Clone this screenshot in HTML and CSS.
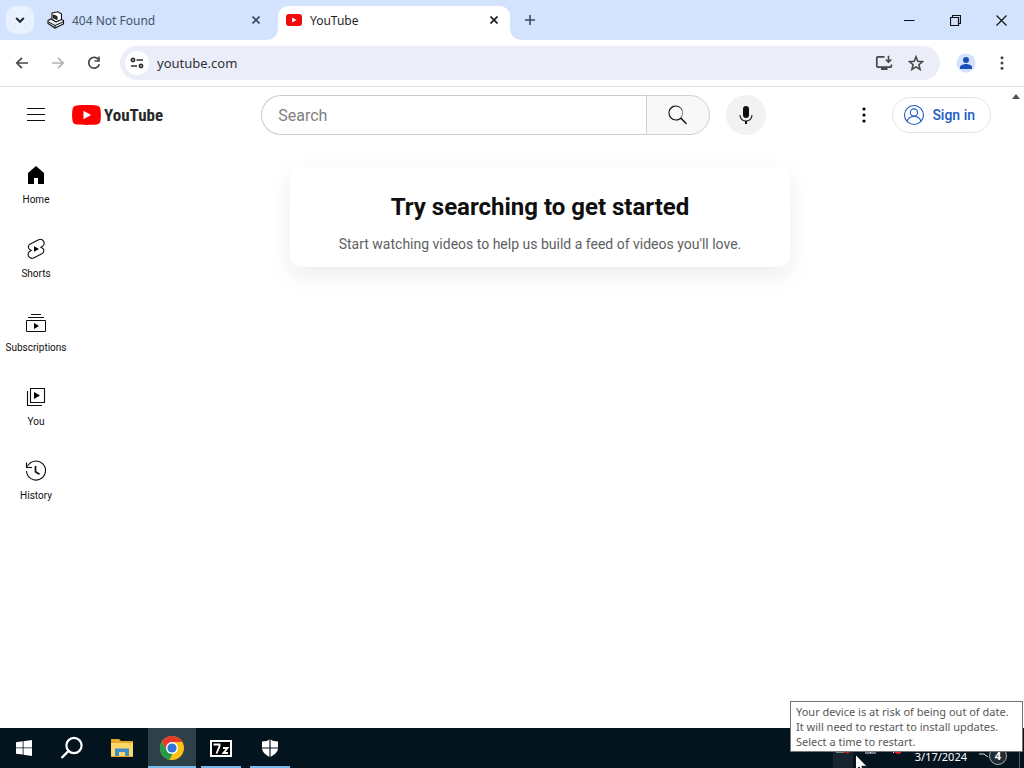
FILE: index.html
```html
<!DOCTYPE html>
<html lang="en">
<head>
<meta charset="utf-8">
<title>YouTube</title>
<link rel="stylesheet" href="styles.css">
</head>
<body>
<div class="desktop">
  <header class="tabstrip">
    <button class="tab-search" aria-label="Search tabs"><svg width="10" height="10" viewBox="0 0 10 10"><path d="M1.2 3 5 6.8 8.800 3" fill="none" stroke="#1b2a3a" stroke-width="2"/></svg></button>
    <div class="tab">
      <svg width="18" height="18" viewBox="0 0 18 18"><path d="M5 2 11 .8 14.500 3v6L9 11 5 8.500Z" fill="#fff" stroke="#111" stroke-width="1.100"/><path d="M6.500 4 10 5.500v3L6.500 7Z" fill="#26334a" stroke="#111"/><path d="M3.500 8 1 9.500v3L8 17l8.500-4V9.500L14.500 8.500 9 11 5 8.500Z" fill="#e8edf5" stroke="#111" stroke-width="1.100"/><path d="M1.500 11 8 14.500 16 11M8 14.500V17" fill="none" stroke="#111"/></svg>
      <span class="tab-title">404 Not Found</span>
      <button class="tab-close" aria-label="Close tab"><svg width="8" height="8" viewBox="0 0 8 8"><path d="M.5.5l7 7M7.500.5l-7 7" stroke="#3c4a5c" stroke-width="1.600"/></svg></button>
    </div>
    <div class="tab tab-active">
      <svg width="16" height="16" viewBox="0 0 16 16"><rect y="2" width="16" height="12" rx="3" fill="#f00a0a"/><path d="M6.200 5.500v5L10.600 8Z" fill="#fff"/></svg>
      <span class="tab-title">YouTube</span>
      <button class="tab-close" aria-label="Close tab"><svg width="8" height="8" viewBox="0 0 8 8"><path d="M.5.5l7 7M7.500.5l-7 7" stroke="#1f1f1f" stroke-width="1.700"/></svg></button>
    </div>
    <button class="tab-new" aria-label="New tab"><svg width="12" height="12" viewBox="0 0 12 12"><path d="M6 1v10M1 6h10" stroke="#3c4a5c" stroke-width="1.600"/></svg></button>
    <div class="window-controls">
      <button aria-label="Minimize"><svg width="11" height="11" viewBox="0 0 11 11"><path d="M0 5.500h10.500" stroke="#111"/></svg></button>
      <button aria-label="Restore"><svg width="11" height="11" viewBox="0 0 11 11"><path d="M.5 2.500h8v8h-8zM2.500 2.500v-2h8v8h-2" fill="none" stroke="#111" stroke-width="1.200"/></svg></button>
      <button aria-label="Close"><svg width="11" height="11" viewBox="0 0 11 11"><path d="M.5.5l10 10M10.500.5l-10 10" stroke="#111" stroke-width="1.200"/></svg></button>
    </div>
  </header>

  <nav class="toolbar" aria-label="Browser toolbar">
    <button class="tool" aria-label="Back"><svg width="14" height="14" viewBox="0 0 14 14"><path d="M13 7H2M7 1.800 1.800 7 7 12.200" fill="none" stroke="#474747" stroke-width="1.700"/></svg></button>
    <button class="tool" aria-label="Forward"><svg width="14" height="14" viewBox="0 0 14 14"><path d="M1 7h11M7 1.800 12.200 7 7 12.200" fill="none" stroke="#b4b4b4" stroke-width="1.700"/></svg></button>
    <button class="tool" aria-label="Reload"><svg width="14" height="14" viewBox="0 0 14 14"><path d="M11.600 3.800A5.400 5.400 0 1 0 12.300 8.200" fill="none" stroke="#474747" stroke-width="1.700"/><path d="M12.800.5v5.300H7.500V4.200h3.700V.5Z" fill="#474747"/></svg></button>
    <div class="omnibox">
      <button class="site-info" aria-label="View site information"><svg width="14" height="12" viewBox="0 0 14 12"><g fill="none" stroke="#303134" stroke-width="1.700"><circle cx="3" cy="3" r="1.600"/><path d="M6.500 3H13M1 9h6"/><circle cx="11" cy="9" r="1.600"/></g></svg></button>
      <input class="address" type="text" value="youtube.com" aria-label="Address">
      <button class="omni-action" aria-label="Install YouTube"><svg width="18" height="16" viewBox="0 0 18 16"><path d="M9.500 1.900H2.800a1 1 0 0 0-1 1v8.200a1 1 0 0 0 1 1h12.600a1 1 0 0 0 1-1V9.500" fill="none" stroke="#474747" stroke-width="1.700"/><path d="M6 12h6.500v3H6Z" fill="#474747"/><path d="M13.500.8v6M10.800 4.500l2.700 2.700 2.700-2.700" fill="none" stroke="#474747" stroke-width="1.600"/></svg></button>
      <button class="omni-action" aria-label="Bookmark this tab"><svg width="16" height="16" viewBox="0 0 16 16"><path d="M8 1.800l1.800 4.400 4.800.4-3.700 3.100 1.200 4.700L8 11.900l-4.100 2.500 1.200-4.700L1.400 6.600l4.800-.4Z" fill="none" stroke="#474747" stroke-width="1.600"/></svg></button>
    </div>
    <button class="profile" aria-label="Profile"><svg width="20" height="20" viewBox="0 0 20 20"><circle cx="10" cy="10" r="9.500" fill="#d3e3fd"/><circle cx="10" cy="7" r="3" fill="#1b50b8"/><path d="M4 16v-2c0-2 4-3 6-3s6 1 6 3v2Z" fill="#1b50b8"/></svg></button>
    <button class="tool" aria-label="Chrome menu"><svg width="4" height="14" viewBox="0 0 4 14" fill="#474747"><circle cx="2" cy="1.800" r="1.500"/><circle cx="2" cy="7" r="1.500"/><circle cx="2" cy="12.200" r="1.500"/></svg></button>
  </nav>

  <div class="viewport">
    <div class="site">
      <header class="masthead">
        <div class="brand">
          <button class="guide" aria-label="Guide"><svg width="24" height="24" viewBox="0 0 24 24"><path d="M3 5.500h18M3 11.500h18M3 17.500h18" stroke="#0f0f0f"/></svg></button>
          <a class="logo" href="#" aria-label="YouTube Home"><svg width="29" height="20" viewBox="0 0 29 20"><path d="M4.500.4C10 0 19 0 24.500.4 27.500.7 28.300 2.600 28.600 5c.4 3 .4 7 0 10-.3 2.400-1.100 4.300-4.100 4.600-5.500.4-14.500.4-20 0C1.500 19.300.7 17.400.4 15c-.4-3-.4-7 0-10C.7 2.600 1.500.7 4.500.4Z" fill="red"/><path d="M11.500 5.800v8.400L19 10Z" fill="#fff"/></svg><span>YouTube</span></a>
        </div>
        <form class="search">
          <input class="search-box" type="text" placeholder="Search" aria-label="Search">
          <button class="search-go" type="button" aria-label="Search"><svg width="24" height="24" viewBox="0 0 24 24"><path d="M20.870 20.170l-5.590-5.590A7.460 7.460 0 0 0 17 10c0-4.140-3.360-7.500-7.500-7.500S2.500 5.860 2.500 10s3.360 7.500 7.500 7.500c1.750 0 3.350-.6 4.620-1.610l5.550 5.550ZM10 16.500a6.500 6.500 0 1 1 0-13 6.500 6.500 0 0 1 0 13Z" fill="#0f0f0f"/></svg></button>
          <button class="mic" type="button" aria-label="Search with your voice"><svg width="24" height="24" viewBox="0 0 24 24" fill="#0f0f0f"><rect x="9" y="3" width="6" height="12" rx="3"/><path d="M18.500 12H17.500a5.500 5.500 0 0 1-11 0H5.500a6.500 6.500 0 0 0 5.500 6.400V21h2v-2.600A6.500 6.500 0 0 0 18.500 12Z"/></svg></button>
        </form>
        <div class="account">
          <button class="settings" aria-label="Settings"><svg width="24" height="24" viewBox="0 0 24 24"><circle cx="12" cy="6" r="1.600"/><circle cx="12" cy="12" r="1.600"/><circle cx="12" cy="18" r="1.600"/></svg></button>
          <a class="sign-in" href="#"><svg width="24" height="24" viewBox="0 0 24 24"><g fill="none" stroke="#1c5dc4" stroke-width="1.100"><circle cx="12" cy="12" r="9.500"/><circle cx="12" cy="9.500" r="3.600"/><path d="M5 18.500c1-3.600 3.500-5 7-5s6 1.400 7 5"/></g></svg>Sign in</a>
        </div>
      </header>
      <div class="site-body">
        <nav class="sidebar" aria-label="Main">
          <a href="#"><svg width="24" height="24" viewBox="0 0 24 24"><path d="M4 10v11h6v-6h4v6h6V10l-8-7Z"/></svg>Home</a>
          <a href="#"><svg width="24" height="24" viewBox="0 0 24 24"><path d="M10 14.650v-5.300L15 12Z"/><path d="M14.200 2.900 6.300 7c-2.700 1.500-2.500 4.800.1 6l.8.400-.9.500c-2.100 1.200-2.800 3.500-1.700 5.400s3.400 2.500 5.400 1.500l7.900-4.100c2.700-1.500 2.500-4.800-.1-6l-.8-.4.900-.5c2.100-1.200 2.800-3.500 1.700-5.400s-3.400-2.500-5.400-1.500Z" fill="none" stroke="#0f0f0f" stroke-width="1.100"/></svg>Shorts</a>
          <a href="#"><svg width="24" height="24" viewBox="0 0 24 24"><path d="M10 18v-6l5 3Z"/><path d="M7 3.500h10M4 6.500h16M2.500 9.500h19v11h-19Z" fill="none" stroke="#0f0f0f"/></svg>Subscriptions</a>
          <a href="#"><svg width="24" height="24" viewBox="0 0 24 24"><path d="M10 7v7l6-3.500Z"/><path d="M6.500 3.500h14v14h-14ZM3.500 6v14.500H18" fill="none" stroke="#0f0f0f" stroke-width="1.100"/></svg>You</a>
          <a href="#"><svg width="24" height="24" viewBox="0 0 24 24"><path d="M3.400 7.500A9.500 9.500 0 1 1 2.500 12" fill="none" stroke="#0f0f0f" stroke-width="1.100"/><path d="M2.500 3.500v5H8" fill="none" stroke="#0f0f0f" stroke-width="1.200"/><path d="M11.500 7v5.800l4 2.400" fill="none" stroke="#0f0f0f" stroke-width="1.700"/></svg>History</a>
        </nav>
        <main class="feed">
          <section class="nudge">
            <h1>Try searching to get started</h1>
            <p>Start watching videos to help us build a feed of videos you'll love.</p>
          </section>
        </main>
      </div>
    </div>
    <div class="scrollbar"><svg width="8" height="5" viewBox="0 0 8 5"><path d="M0 5 4 0l4 5Z" fill="#505050"/></svg></div>
  </div>

  <footer class="taskbar">
    <button class="task start" aria-label="Start"><svg width="16" height="16" viewBox="0 0 16 16" fill="#fff"><path d="M0 2.300 6.700 1.300v6.200H0ZM7.500 1.200 16 0v7.500H7.500ZM0 8.300h6.700v6.300L0 13.700ZM7.500 8.300H16V16l-8.500-1.200Z"/></svg></button>
    <button class="task" aria-label="Search"><svg width="24" height="24" viewBox="0 0 24 24"><circle cx="14" cy="9.500" r="7.600" fill="none" stroke="#fff" stroke-width="2.200"/><path d="M8.500 15 1.500 22" stroke="#fff" stroke-width="2.400"/></svg></button>
    <button class="task" aria-label="File Explorer"><svg width="22" height="18" viewBox="0 0 22 18"><path d="M0 0h8l2 2h12v16H0Z" fill="#e6a92c"/><path d="M0 4h22v13H0Z" fill="#fcd767"/><path d="M4 17V9.500h14V17h-4v-4H8v4Z" fill="#3d8fc9"/></svg></button>
    <button class="task open current" aria-label="Google Chrome"><svg width="24" height="24" viewBox="0 0 24 24"><circle cx="12" cy="12" r="12" fill="#fbc116"/><path d="M1.600 6A12 12 0 0 1 22.400 6H12L7 15Z" fill="#e33b2e"/><path d="M1.600 6 7.200 15l5.200 2.500L12 24A12 12 0 0 1 1.600 6Z" fill="#249b4a"/><path d="M17.200 15 12 24 9.500 23.700 13 17Z" fill="#fbc116"/><circle cx="12" cy="12" r="6" fill="#fff"/><circle cx="12" cy="12" r="4.600" fill="#2f74dc"/></svg></button>
    <button class="task open" aria-label="7-Zip"><svg width="22" height="17" viewBox="0 0 22 17"><path d="M0 0h22v17H0Z" fill="#fff"/><path d="M2 2h18v13H2Z" fill="#000"/><path d="M3.500 4.500h6v1.800L6.500 13.500M13 8h4.500L13.500 13H18" fill="none" stroke="#fff" stroke-width="1.900"/></svg></button>
    <button class="task open" aria-label="Windows Security"><svg width="18" height="18" viewBox="0 0 18 18"><path d="M9 0c2 1.800 5 2.500 8 2.500V9c0 4-3.500 7-8 9C4.500 16 1 13 1 9V2.500C4 2.500 7 1.800 9 0Z" fill="#fff"/><path d="M9 0v18M0 9h18" stroke="#04141f" stroke-width="1.200"/></svg></button>
    <div class="tray">
      <button class="tray-update" aria-label="Updates"><svg width="20" height="10" viewBox="0 0 20 10"><path d="M3 1v2h8" fill="none" stroke="#ddd"/><circle cx="14" cy="1.500" r="3" fill="#d41c24"/></svg></button>
      <svg width="12" height="10" viewBox="0 0 12 10"><path d="M0 4h11M5.500 0v4" stroke="#ddd"/></svg>
      <svg width="14" height="10" viewBox="0 0 14 10"><path d="M1 0 5 4" stroke="#ddd"/><circle cx="9" cy="1" r="4" fill="#d41c24"/><path d="M7 0 11 3M11 0 7 3" stroke="#fff"/></svg>
      <time datetime="2024-03-17">3/17/2024</time>
      <div class="notices"><svg width="10" height="6" viewBox="0 0 10 6"><path d="M0 1h5l4 3" fill="none" stroke="#ddd"/></svg><span>4</span></div>
    </div>
  </footer>

  <div class="tooltip" role="tooltip">Your device is at risk of being out of date.<br>It will need to restart to install updates.<br>Select a time to restart.</div>
  <svg class="cursor" width="13" height="20" viewBox="0 0 13 20"><path d="M.5.5v16l3.700-3.500L7 19.500l2.500-1L6.800 12.300H12Z" fill="#fff" stroke="#111"/></svg>
</div>
</body>
</html>
```

FILE: styles.css
```css
* { box-sizing: border-box; }
body { margin: 0; font-family: Roboto, "Liberation Sans", sans-serif; color: #0f0f0f; background: #fff; }
button { border: 0; padding: 0; background: none; display: flex; align-items: center; justify-content: center; flex: none; }
input { border: 0; outline: 0; min-width: 0; }
a { color: inherit; text-decoration: none; }
svg { display: block; flex: none; }

.desktop { position: relative; display: flex; flex-direction: column; height: 100vh; overflow: hidden; }

/* Browser frame */
.tabstrip { display: flex; height: 40px; padding: 6px 0 0 6px; background: #d3e3fd; font: 12px/16px "Noto Sans", "Open Sans", sans-serif; }
.tab-search { width: 28px; height: 28px; border-radius: 10px; background: #e9f1fe; }
.tab { display: flex; align-items: center; gap: 7px; width: 232px; height: 28px; margin-left: 4px; padding: 0 10px 0 9px; color: #44546b; }
.tab-title { flex: 1; padding-top: 2px; }
.tab-close { width: 8px; height: 16px; }
.tab-active { position: relative; height: 34px; margin-left: 8px; padding: 0 12px 6px 8px; gap: 8px; border-radius: 10px 10px 0 0; background: #fff; color: #1f1f1f; }
.tab-active::before, .tab-active::after { content: ""; position: absolute; bottom: 0; width: 10px; height: 10px; }
.tab-active::before { right: 100%; background: radial-gradient(circle at 0 0, #d3e3fd 9px, #fff 10px); }
.tab-active::after { left: 100%; background: radial-gradient(circle at 100% 0, #d3e3fd 9px, #fff 10px); }
.tab-new { width: 28px; height: 28px; margin-left: 6px; }
.window-controls { display: flex; margin-left: auto; height: 28px; }
.window-controls button { width: 46px; }

.toolbar { display: flex; align-items: center; height: 47px; padding: 0 8px; gap: 8px; border-bottom: 1px solid #dedede; background: #fff; }
.tool { width: 28px; height: 28px; }
.omnibox { display: flex; align-items: center; flex: 1; height: 34px; margin-left: 4px; padding: 0 8px 0 5px; border-radius: 17px; background: #ebeef8; }
.site-info { width: 24px; height: 24px; border-radius: 50%; background: #fff; }
.address { flex: 1; padding: 0 8px; background: none; font: 13px/20px "Noto Sans", "Open Sans", sans-serif; color: #303134; }
.omni-action { width: 32px; height: 28px; }
.profile { width: 28px; height: 28px; margin-left: 4px; }

/* Page */
.viewport { display: flex; flex: 1; min-height: 0; }
.scrollbar { width: 16px; padding: 7px 0 0 4px; }
.site { display: flex; flex: 1; flex-direction: column; min-width: 0; }
.masthead { display: flex; align-items: center; justify-content: space-between; height: 56px; padding: 0 17px 0 24px; }
.brand { display: flex; align-items: center; gap: 24px; width: 151px; }
.logo { display: flex; align-items: center; gap: 3px; font: bold 17px/24px "Roboto Condensed", Roboto, sans-serif; color: #282828; }
.search { display: flex; width: 505px; }
.search-box { flex: 1; height: 40px; padding: 0 16px; border: 1px solid #ccc; border-right: 0; border-radius: 20px 0 0 20px; font: 16px/24px Roboto, sans-serif; }
.search-box::placeholder { color: #808080; opacity: 1; }
.search-go { width: 64px; height: 40px; border: 1px solid #d0d0d0; border-radius: 0 20px 20px 0; background: #f8f8f8; }
.mic { width: 40px; height: 40px; margin-left: 16px; border-radius: 50%; background: #f2f2f2; }
.account { display: flex; align-items: center; gap: 16px; }
.sign-in { display: flex; align-items: center; gap: 6px; height: 36px; padding: 0 15px 0 9px; border: 1px solid #e5e5e5; border-radius: 18px; color: #1c5dc4; font-size: 14px; font-weight: 500; }
.site-body { display: flex; flex: 1; }
.sidebar { width: 72px; padding-top: 4px; }
.sidebar a { display: flex; flex-direction: column; align-items: center; gap: 6px; padding: 16px 0 14px; font-size: 10px; line-height: 14px; }
.feed { flex: 1; padding: 24px; }
.nudge { max-width: 500px; margin: 0 auto; padding: 24px 24px 13px; border-radius: 10px; background: #fff; box-shadow: 0 8px 24px rgba(0, 0, 0, .08); text-align: center; }
.nudge h1 { margin: 0 0 11px; font-size: 24px; line-height: 32px; font-weight: 700; }
.nudge p { margin: 0; font-size: 14px; line-height: 20px; color: #606060; }

/* Taskbar */
.taskbar { display: flex; height: 40px; background: #04141f; }
.task { width: 48px; height: 40px; padding-top: 2px; border-bottom: 2px solid transparent; margin-right: 2px; }
.start { margin-right: 0; }
.open { width: 40px; margin-right: 9px; border-bottom-color: #76b9ed; }
.current { width: 48px; margin-right: 5px; background: #2f4148; }
.tray { display: flex; align-items: flex-end; margin-left: auto; color: #fff; padding-right: 4px; gap: 12px; }
.tray > svg { margin-bottom: 9px; }
.tray-update { width: 20px; height: 40px; align-items: flex-end; padding-bottom: 9px; background: #16252f; }
.tray time { font: 11px/16px "Noto Sans", "Open Sans", sans-serif; padding-bottom: 3px; }
.notices { display: flex; align-items: center; height: 24px; border-right: 1px solid #53606a; padding-right: 12px; }
.notices span { width: 18px; height: 18px; border: 1px solid #aaa; border-radius: 50%; background: #202b33; font: bold 11px/16px "Noto Sans", sans-serif; text-align: center; }

.tooltip { position: absolute; right: 1px; bottom: 16px; min-width: 233px; padding: 2px 9px 2px 5px; border: 1px solid #767676; background: #fff; color: #575757; font: 11px/15px "Noto Sans", "Open Sans", sans-serif; white-space: nowrap; }
.cursor { position: absolute; right: 156px; bottom: -6px; }
```
